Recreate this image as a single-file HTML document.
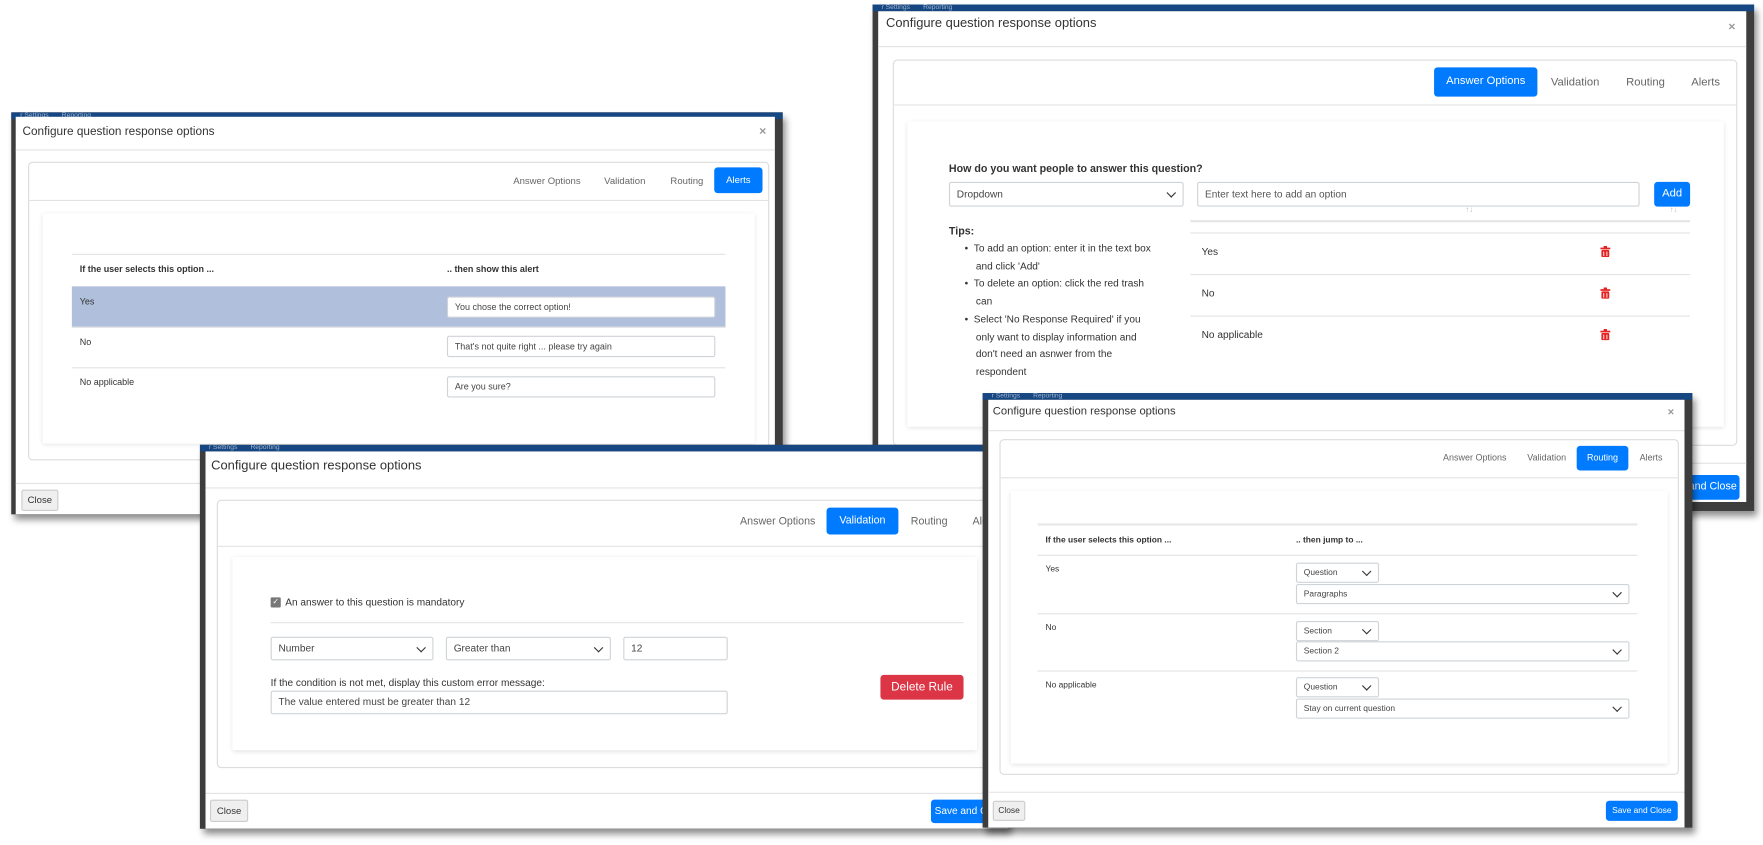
<!DOCTYPE html>
<html><head><meta charset="utf-8">
<style>
*{box-sizing:border-box;margin:0;padding:0}
html,body{width:1763px;height:845px;overflow:hidden;background:#fff}
body{font-family:"Liberation Sans",sans-serif;color:#333}
#stage{position:absolute;left:0;top:0;width:1570px;height:752px;transform:scale(1.123);transform-origin:0 0}
.modal{position:absolute;background:#3d3d3d;box-shadow:3px 5px 6px rgba(0,0,0,.45);overflow:hidden}
.bar{position:absolute;left:0;top:0;right:0;height:6px;background:#174783;font-size:6px;color:#9fb3cc;line-height:6px;padding-left:8px;white-space:nowrap}
.body{position:absolute;background:#fff;overflow:hidden}
.abs{position:absolute;white-space:nowrap}
.t{position:absolute;white-space:nowrap;font-size:11.5px;color:#333}
.x{position:absolute;font-size:11px;color:#999;font-weight:bold}
.hl{position:absolute;height:1px;background:#e3e3e3}
.card{position:absolute;border:1px solid #dcdcdc;border-radius:4px}
.panel{position:absolute;box-shadow:0 1px 4px rgba(0,0,0,.12);background:#fff}
.tab{position:absolute;font-size:9.5px;color:#666;white-space:nowrap}
.btn{position:absolute;background:#007bff;color:#fff;border-radius:3px;text-align:center;white-space:nowrap}
.inp{position:absolute;border:1px solid #cfd3d7;border-radius:2px;background:#fff;font-size:8.5px;color:#444;padding-left:6px;white-space:nowrap;overflow:hidden}
.sel::after{content:"";position:absolute;right:7px;top:50%;width:5px;height:5px;border-right:1.6px solid #333;border-bottom:1.6px solid #333;transform:translateY(-70%) rotate(45deg)}
.gbtn{position:absolute;background:#efefef;border:1px solid #ccc;border-radius:2px;font-size:8.5px;text-align:center;color:#333}
.bold{font-weight:bold}
</style></head><body>
<div id="stage">

<!-- Modal A: Alerts -->
<div class="modal" style="left:10px;top:100px;width:687px;height:358px">
 <div class="bar">r Settings &nbsp;&nbsp;&nbsp;&nbsp;&nbsp; Reporting</div>
 <div class="body" style="left:4px;top:4px;width:676px;height:354px"></div>
 <div class="t" style="left:10px;top:11px;font-size:10.5px">Configure question response options</div>
 <div class="x" style="left:666px;top:11px">×</div>
 <div class="hl" style="left:4px;top:33px;width:676px"></div>
 <div class="card" style="left:15px;top:44px;width:660px;height:266px"></div>
 <div class="tab" style="left:447px;top:56px;font-size:8.5px">Answer Options</div>
 <div class="tab" style="left:528px;top:56px;font-size:8.5px">Validation</div>
 <div class="tab" style="left:587px;top:56px;font-size:8.5px">Routing</div>
 <div class="btn" style="left:626px;top:49px;width:43px;height:23px;font-size:8.5px;line-height:23px">Alerts</div>
 <div class="hl" style="left:15px;top:78px;width:660px"></div>
 <div class="panel" style="left:28px;top:90px;width:634px;height:205px"></div>
 <div class="hl" style="left:54px;top:126px;width:582px"></div>
 <div class="abs bold" style="left:61px;top:135px;font-size:8px">If the user selects this option ...</div>
 <div class="abs bold" style="left:388px;top:135px;font-size:8px">.. then show this alert</div>
 <div class="abs" style="left:54px;top:155px;width:582px;height:36px;background:#b0bfdb"></div>
 <div class="abs" style="left:61px;top:164px;font-size:8px">Yes</div>
 <div class="inp" style="left:388px;top:164px;width:239px;height:19px;line-height:17px;font-size:8px">You chose the correct option!</div>
 <div class="hl" style="left:54px;top:191px;width:582px"></div>
 <div class="abs" style="left:61px;top:200px;font-size:8px">No</div>
 <div class="inp" style="left:388px;top:199px;width:239px;height:19px;line-height:17px;font-size:8px">That's not quite right ... please try again</div>
 <div class="hl" style="left:54px;top:227px;width:582px"></div>
 <div class="abs" style="left:61px;top:236px;font-size:8px">No applicable</div>
 <div class="inp" style="left:388px;top:235px;width:239px;height:19px;line-height:17px;font-size:8px">Are you sure?</div>
 <div class="hl" style="left:4px;top:330px;width:676px"></div>
 <div class="gbtn" style="left:9px;top:336px;width:33px;height:19px;line-height:17px">Close</div>
</div>

<!-- Modal B: Answer Options -->
<div class="modal" style="left:777px;top:4px;width:785px;height:451px">
 <div class="bar">r Settings &nbsp;&nbsp;&nbsp;&nbsp;&nbsp; Reporting</div>
 <div class="body" style="left:5px;top:6px;width:773px;height:437px"></div>
 <div class="t" style="left:12px;top:11px;font-size:11.5px">Configure question response options</div>
 <div class="x" style="left:762px;top:14px">×</div>
 <div class="hl" style="left:5px;top:37px;width:773px"></div>
 <div class="card" style="left:18px;top:49px;width:752px;height:344px"></div>
 <div class="btn" style="left:500px;top:56px;width:92px;height:26px;font-size:10px;line-height:26px">Answer Options</div>
 <div class="tab" style="left:604px;top:64px;font-size:10px">Validation</div>
 <div class="tab" style="left:671px;top:64px;font-size:10px">Routing</div>
 <div class="tab" style="left:729px;top:64px;font-size:10px">Alerts</div>
 <div class="hl" style="left:18px;top:89px;width:752px"></div>
 <div class="panel" style="left:31px;top:104px;width:727px;height:272px"></div>
 <div class="abs bold" style="left:68px;top:141px;font-size:9.5px">How do you want people to answer this question?</div>
 <div class="inp sel" style="left:68px;top:158px;width:209px;height:22px;line-height:20px;font-size:9px">Dropdown</div>
 <div class="inp" style="left:289px;top:158px;width:394px;height:22px;line-height:20px;font-size:9px;color:#555">Enter text here to add an option</div>
 <div class="btn" style="left:696px;top:158px;width:32px;height:22px;font-size:10px;line-height:22px">Add</div>
 <div class="abs" style="left:528px;top:180px;font-size:7px;color:#bbb">↑↓</div>
 <div class="abs" style="left:710px;top:180px;font-size:7px;color:#bbb">↑↓</div>
 <div class="hl" style="left:283px;top:192px;width:445px;height:2px;background:#e6e6e6"></div>
 <div class="hl" style="left:283px;top:203px;width:445px"></div>
 <div class="hl" style="left:283px;top:240px;width:445px"></div>
 <div class="hl" style="left:283px;top:277px;width:445px"></div>
 <div class="abs" style="left:293px;top:215px;font-size:9px">Yes</div>
 <div class="abs" style="left:293px;top:252px;font-size:9px">No</div>
 <div class="abs" style="left:293px;top:289px;font-size:9px">No applicable</div>
 <svg class="abs" style="left:648px;top:215px" width="9" height="10" viewBox="0 0 9 10"><rect x="0" y="1.5" width="9" height="1.5" fill="#e52222"/><rect x="3" y="0" width="3" height="2" fill="#e52222"/><rect x="1" y="3.5" width="7" height="6.5" rx="1" fill="#e52222"/><rect x="2.7" y="5" width=".8" height="4" fill="#fff"/><rect x="5.5" y="5" width=".8" height="4" fill="#fff"/></svg>
 <svg class="abs" style="left:648px;top:252px" width="9" height="10" viewBox="0 0 9 10"><rect x="0" y="1.5" width="9" height="1.5" fill="#e52222"/><rect x="3" y="0" width="3" height="2" fill="#e52222"/><rect x="1" y="3.5" width="7" height="6.5" rx="1" fill="#e52222"/><rect x="2.7" y="5" width=".8" height="4" fill="#fff"/><rect x="5.5" y="5" width=".8" height="4" fill="#fff"/></svg>
 <svg class="abs" style="left:648px;top:289px" width="9" height="10" viewBox="0 0 9 10"><rect x="0" y="1.5" width="9" height="1.5" fill="#e52222"/><rect x="3" y="0" width="3" height="2" fill="#e52222"/><rect x="1" y="3.5" width="7" height="6.5" rx="1" fill="#e52222"/><rect x="2.7" y="5" width=".8" height="4" fill="#fff"/><rect x="5.5" y="5" width=".8" height="4" fill="#fff"/></svg>
 <div class="abs bold" style="left:68px;top:197px;font-size:9.5px">Tips:</div>
 <div class="abs" style="left:82px;top:210px;font-size:9px;line-height:15.7px;color:#333">
  • &nbsp;To add an option: enter it in the text box<br>&nbsp;&nbsp;&nbsp;&nbsp;and click 'Add'<br>• &nbsp;To delete an option: click the red trash<br>&nbsp;&nbsp;&nbsp;&nbsp;can<br>• &nbsp;Select 'No Response Required' if you<br>&nbsp;&nbsp;&nbsp;&nbsp;only want to display information and<br>&nbsp;&nbsp;&nbsp;&nbsp;don't need an asnwer from the<br>&nbsp;&nbsp;&nbsp;&nbsp;respondent
 </div>
 <div class="hl" style="left:5px;top:408px;width:773px"></div>
 <div class="btn" style="left:700px;top:419px;width:72px;height:22px;font-size:9.5px;line-height:22px">Save and Close</div>
</div>

<!-- Modal C: Validation -->
<div class="modal" style="left:178px;top:396px;width:720px;height:342px">
 <div class="bar">r Settings &nbsp;&nbsp;&nbsp;&nbsp;&nbsp; Reporting</div>
 <div class="body" style="left:5px;top:6px;width:715px;height:336px"></div>
 <div class="t" style="left:10px;top:13px;font-size:11.5px">Configure question response options</div>
 <div class="hl" style="left:5px;top:38px;width:715px"></div>
 <div class="card" style="left:15px;top:49px;width:720px;height:239px"></div>
 <div class="tab" style="left:481px;top:63px;font-size:9.5px">Answer Options</div>
 <div class="btn" style="left:558px;top:56px;width:64px;height:24px;font-size:9.5px;line-height:24px">Validation</div>
 <div class="tab" style="left:633px;top:63px;font-size:9.5px">Routing</div>
 <div class="tab" style="left:688px;top:63px;font-size:9.5px">Alerts</div>
 <div class="hl" style="left:15px;top:90px;width:720px"></div>
 <div class="panel" style="left:29px;top:100px;width:663px;height:172px"></div>
 <div class="abs" style="left:63px;top:136px;width:9px;height:9px;background:#777;border-radius:1px;color:#fff;font-size:7px;line-height:9px;text-align:center">✓</div>
 <div class="abs" style="left:76px;top:135px;font-size:9px">An answer to this question is mandatory</div>
 <div class="hl" style="left:63px;top:158px;width:617px"></div>
 <div class="inp sel" style="left:63px;top:171px;width:145px;height:21px;line-height:19px;font-size:9px">Number</div>
 <div class="inp sel" style="left:219px;top:171px;width:147px;height:21px;line-height:19px;font-size:9px">Greater than</div>
 <div class="inp" style="left:377px;top:171px;width:93px;height:21px;line-height:19px;font-size:9px">12</div>
 <div class="abs" style="left:63px;top:207px;font-size:9px">If the condition is not met, display this custom error message:</div>
 <div class="inp" style="left:63px;top:219px;width:407px;height:21px;line-height:19px;font-size:9px">The value entered must be greater than 12</div>
 <div class="abs" style="left:606px;top:205px;width:74px;height:22px;background:#dc3545;color:#fff;border-radius:3px;font-size:10.5px;line-height:22px;text-align:center">Delete Rule</div>
 <div class="hl" style="left:5px;top:310px;width:715px"></div>
 <div class="gbtn" style="left:9px;top:316px;width:34px;height:20px;line-height:18px">Close</div>
 <div class="btn" style="left:651px;top:316px;width:70px;height:21px;font-size:9px;line-height:21px">Save and Close</div>
</div>

<!-- Modal D: Routing -->
<div class="modal" style="left:875px;top:350px;width:632px;height:387px">
 <div class="bar">r Settings &nbsp;&nbsp;&nbsp;&nbsp;&nbsp; Reporting</div>
 <div class="body" style="left:5px;top:6px;width:620px;height:381px"></div>
 <div class="t" style="left:9px;top:11px;font-size:10px">Configure question response options</div>
 <div class="x" style="left:610px;top:12px;font-size:10px">×</div>
 <div class="hl" style="left:5px;top:33px;width:620px"></div>
 <div class="card" style="left:15px;top:41px;width:605px;height:299px"></div>
 <div class="tab" style="left:410px;top:53px;font-size:8px">Answer Options</div>
 <div class="tab" style="left:485px;top:53px;font-size:8px">Validation</div>
 <div class="btn" style="left:529px;top:47px;width:46px;height:22px;font-size:8px;line-height:22px">Routing</div>
 <div class="tab" style="left:585px;top:53px;font-size:8px">Alerts</div>
 <div class="hl" style="left:15px;top:75px;width:605px"></div>
 <div class="panel" style="left:25px;top:87px;width:585px;height:243px"></div>
 <div class="hl" style="left:49px;top:116px;width:534px;height:2px;background:#e8e8e8"></div>
 <div class="abs bold" style="left:56px;top:126px;font-size:7.5px">If the user selects this option ...</div>
 <div class="abs bold" style="left:279px;top:126px;font-size:7.5px">.. then jump to ...</div>
 <div class="hl" style="left:49px;top:144px;width:534px"></div>
 <div class="abs" style="left:56px;top:152px;font-size:7.5px">Yes</div>
 <div class="inp sel" style="left:279px;top:151px;width:74px;height:18px;line-height:16px;font-size:7.5px">Question</div>
 <div class="inp sel" style="left:279px;top:170px;width:297px;height:18px;line-height:16px;font-size:7.5px">Paragraphs</div>
 <div class="hl" style="left:49px;top:196px;width:534px"></div>
 <div class="abs" style="left:56px;top:204px;font-size:7.5px">No</div>
 <div class="inp sel" style="left:279px;top:203px;width:74px;height:18px;line-height:16px;font-size:7.5px">Section</div>
 <div class="inp sel" style="left:279px;top:221px;width:297px;height:18px;line-height:16px;font-size:7.5px">Section 2</div>
 <div class="hl" style="left:49px;top:247px;width:534px"></div>
 <div class="abs" style="left:56px;top:255px;font-size:7.5px">No applicable</div>
 <div class="inp sel" style="left:279px;top:253px;width:74px;height:18px;line-height:16px;font-size:7.5px">Question</div>
 <div class="inp sel" style="left:279px;top:272px;width:297px;height:18px;line-height:16px;font-size:7.5px">Stay on current question</div>
 <div class="hl" style="left:5px;top:355px;width:620px"></div>
 <div class="gbtn" style="left:9px;top:363px;width:29px;height:18px;line-height:16px;font-size:7.5px">Close</div>
 <div class="btn" style="left:555px;top:363px;width:64px;height:18px;font-size:7.5px;line-height:18px">Save and Close</div>
</div>

</div>
</body></html>
